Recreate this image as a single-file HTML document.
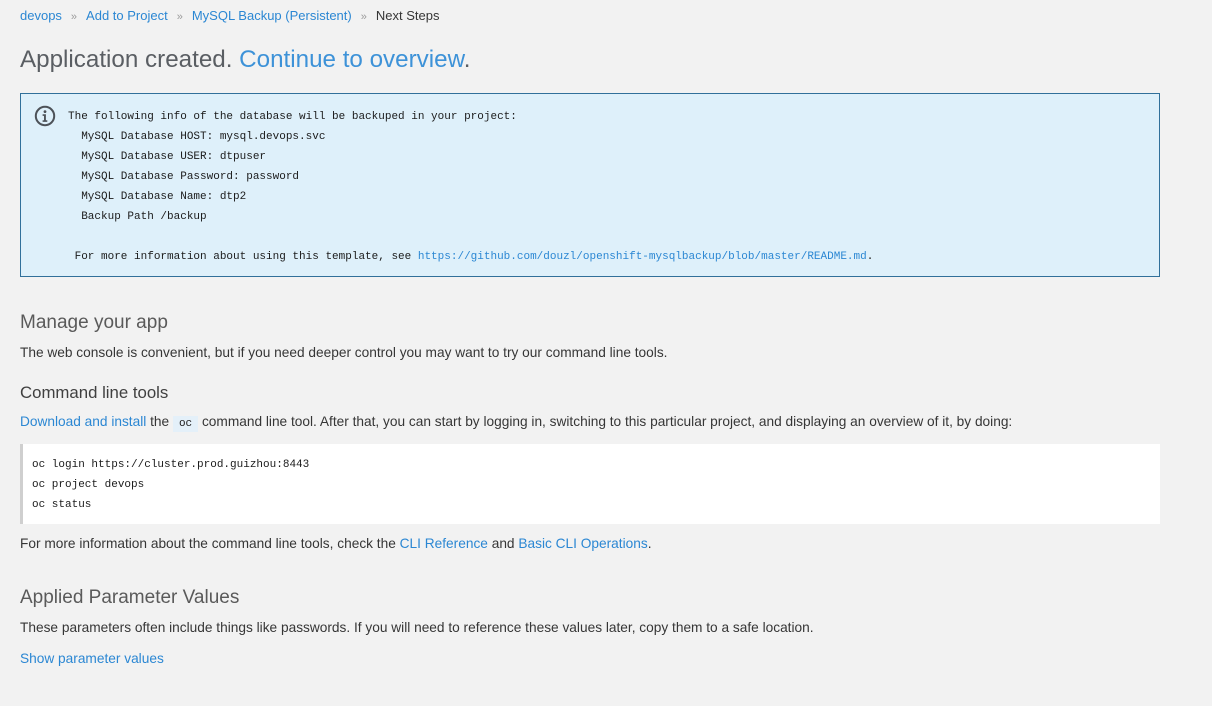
<!DOCTYPE html>
<html><head><meta charset="utf-8"><style>
body{margin:0;background:#f2f2f2;font-family:"Liberation Sans",sans-serif;color:#363636;width:1212px;height:706px;overflow:hidden}
a{color:#2b87d3;text-decoration:none}
.bc{position:absolute;top:8px;left:20px;font-size:13px}
.bc span.s{color:#9c9c9c;margin:0 9px;font-size:11px}
h1{position:absolute;top:46px;left:20px;margin:0;font-weight:300;font-size:24.2px;color:#5a5e63}
h1 a{color:#3d92d8}
.info{position:absolute;top:93px;left:20px;width:1138px;height:182px;background:#def0fa;border:1px solid #31709a}
.mono{font-family:"Liberation Mono",monospace;font-size:11px;color:#1b1b1b}
.info .mono{position:absolute;left:47px;top:13px;line-height:20px;white-space:pre}
.icon{position:absolute;left:13px;top:11px}
h2{position:absolute;margin:0;font-weight:300;font-size:19px;color:#5a5a5a}
h3{position:absolute;margin:0;font-weight:400;font-size:16.8px;color:#404040}
p{position:absolute;margin:0;font-size:13.7px;left:20px;white-space:nowrap}
code.oc{background:#e4f0f9;padding:2px 6px;font-family:"Liberation Mono",monospace;font-size:11px;color:#1b1b1b}
pre{position:absolute;top:444px;left:20px;width:1140px;height:80px;margin:0;background:#fff;border-left:3px solid #cfcfcf;box-sizing:border-box;padding:11px 9px;line-height:20px}
</style></head><body>
<div class="bc"><a>devops</a><span class="s">»</span><a>Add to Project</a><span class="s">»</span><a>MySQL Backup (Persistent)</a><span class="s">»</span><span>Next Steps</span></div>
<h1>Application created. <a>Continue to overview</a>.</h1>
<div class="info">
<svg class="icon" width="22" height="22" viewBox="0 0 22 22"><circle cx="11" cy="11" r="9.2" fill="none" stroke="#4d5258" stroke-width="2"/><circle cx="11" cy="6.6" r="1.4" fill="#4d5258"/><path d="M8.6 9.3h3.3v6h1.4v1.6H8.6v-1.6h1.4v-4.4H8.6z" fill="#4d5258"/></svg>
<div class="mono">The following info of the database will be backuped in your project:
  MySQL Database HOST: mysql.devops.svc
  MySQL Database USER: dtpuser
  MySQL Database Password: password
  MySQL Database Name: dtp2
  Backup Path /backup

 For more information about using this template, see <a>https://github.com/douzl/openshift-mysqlbackup/blob/master/README.md</a>.</div>
</div>
<h2 style="top:312px;left:20px">Manage your app</h2>
<p style="top:345px">The web console is convenient, but if you need deeper control you may want to try our command line tools.</p>
<h3 style="top:383px;left:20px">Command line tools</h3>
<p style="top:414px"><a>Download and install</a> the <code class="oc">oc</code> command line tool. After that, you can start by logging in, switching to this particular project, and displaying an overview of it, by doing:</p>
<pre class="mono">oc login https://cluster.prod.guizhou:8443
oc project devops
oc status</pre>
<p style="top:536px">For more information about the command line tools, check the <a>CLI Reference</a> and <a>Basic CLI Operations</a>.</p>
<h2 style="top:587px;left:20px">Applied Parameter Values</h2>
<p style="top:620px">These parameters often include things like passwords. If you will need to reference these values later, copy them to a safe location.</p>
<p style="top:651px"><a>Show parameter values</a></p>
</body></html>
